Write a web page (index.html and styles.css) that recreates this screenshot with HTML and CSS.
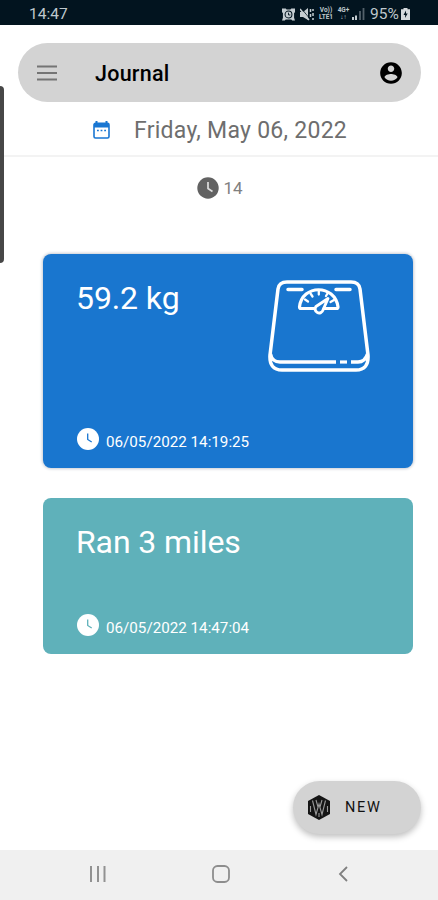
FILE: index.html
```html
<!DOCTYPE html>
<html lang="en">

<head>
    <meta charset="UTF-8">
    <meta name="viewport" content="width=device-width, initial-scale=1.0">
    <title>Journal</title>
    <link rel="stylesheet" href="styles.css">
</head>

<body>
    <div class="status-bar">
        <span class="status-time">14:47</span>
        <div class="status-icons">
            <!-- alarm -->
            <svg class="alarm" width="13" height="13" viewBox="0 0 14 13">
                <path d="M0 0h4l1 1h4l1-1h4v4l-1 1v5l1 3h-3l-1-1H4l-1 1H0l1-3V5L0 4z" fill="#c5cdd1" />
                <circle cx="7" cy="6.500" r="3.700" fill="none" stroke="#02141f" stroke-width="1.100" />
                <path d="M7 4.500V7h2" fill="none" stroke="#02141f" />
            </svg>
            <!-- muted, vibrate -->
            <svg class="mute" width="14" height="13" viewBox="0 0 14 13">
                <path d="M0 4h3l5-4v12L3 9H0z" fill="#c5cdd1" />
                <path d="M1 0l9 11" stroke="#02141f" stroke-width=".8" />
                <path d="M0 1l9 11M10.500 1v3M10.500 6v3M13 1v2M13 5v3M13 10v2" stroke="#c5cdd1" stroke-width="1.500" />
            </svg>
            <span class="net volte"><span>Vo))</span><span>LTE1</span></span>
            <span class="net data"><span>4G+</span><span>↓↑</span></span>
            <!-- signal -->
            <svg class="signal" width="13" height="12" viewBox="0 0 13 12">
                <path d="M1 9v3M4 7.500V12" stroke="#c5cdd1" stroke-width="2" />
                <path d="M8 3v9M11.500 0v12" stroke="#53616a" stroke-width="1.800" />
            </svg>
            <span class="percent">95%</span>
            <svg class="battery" width="9" height="12" viewBox="0 0 9 12">
                <path d="M2.500 0h4v1.200H9V12H0V1.200h2.500z" fill="#d5dadd" />
                <path d="M5 2.500L2.500 7h1.700L4 10l2.700-4.500H5z" fill="#02141f" />
            </svg>
        </div>
    </div>

    <div class="drawer-handle"></div>

    <header class="toolbar">
        <svg class="menu" width="20" height="16" viewBox="0 0 20 16">
            <path d="M0 1.500h20M0 8h20M0 14.500h20" stroke="#747474" stroke-width="2.200" />
        </svg>
        <h1>Journal</h1>
        <svg class="account" width="26" height="26" viewBox="0 0 24 24">
            <path d="M12 2C6.480 2 2 6.480 2 12s4.480 10 10 10 10-4.480 10-10S17.520 2 12 2zm0 3c1.660 0 3 1.340 3 3s-1.340 3-3 3-3-1.340-3-3 1.340-3 3-3zm0 14.200c-2.500 0-4.710-1.280-6-3.220.03-1.990 4-3.080 6-3.080 1.990 0 5.970 1.090 6 3.080-1.290 1.940-3.500 3.220-6 3.220z" />
        </svg>
    </header>

    <div class="date-row">
        <svg width="17" height="18" viewBox="0 0 17 18">
            <path d="M2.500 2.300h12a1.500 1.500 0 0 1 1.500 1.500v11.700a1.500 1.500 0 0 1-1.500 1.500h-12A1.500 1.500 0 0 1 1 15.500V3.800a1.500 1.500 0 0 1 1.500-1.500z" fill="#fff" stroke="#1976d2" stroke-width="1.600" />
            <path d="M1 2h15v4.500H1zM2.500 0h2v3h-2zM12.500 0h2v3h-2z" fill="#1976d2" />
            <path d="M4 9.500h1.800M7.600 9.500h1.800M11.200 9.500H13" stroke="#1976d2" stroke-width="1.600" />
        </svg>
        <span>Friday, May 06, 2022</span>
    </div>

    <div class="hour">
        <svg width="22" height="22" viewBox="0 0 22 22">
            <circle cx="11" cy="11" r="10.700" fill="#626262" />
            <path d="M11 5v6.500l4.500 3" fill="none" stroke="#ddd" stroke-width="1.700" />
        </svg>
        <span>14</span>
    </div>

    <main class="entries">
        <article class="card weight">
            <h2>59.2 kg</h2>
            <!-- bathroom scale -->
            <svg class="scale" width="102" height="93" viewBox="0 0 102 93" fill="none" stroke="#fff" stroke-width="3.500" stroke-linecap="round" stroke-linejoin="round">
                <path d="M19 2H83Q91 2 92 9L100 75Q101 90 88 90H14Q1 90 2 75L10 9Q11 2 19 2z" />
                <path d="M2.500 74Q4 82 12 82H68M83 82H90Q97 82 99.500 74" stroke-linecap="butt" />
                <path d="M72 82h7" stroke-width="3.200" stroke-linecap="butt" />
                <path d="M20 9.500H34M68 9.500H82" />
                <path d="M46 28.500H33Q31.500 28.500 31.500 27C34 4 67 4 70 27Q70 28.500 68.500 28.500H56" stroke-width="3.200" />
                <path d="M37 19.500l3 2M42.500 13.500l2 3M50.800 10.500v4M59.500 13.500l-1.500 2.500M66 20l-3.500 2" stroke-width="2.300" />
                <path d="M60 18.500L48 26.500A4 4 0 1 0 55 30z" stroke-width="2.900" />
            </svg>
            <div class="stamp">
                <svg width="22" height="22" viewBox="0 0 22 22">
                    <circle cx="11" cy="11" r="11" fill="#fff" />
                    <path d="M10.700 5.500v6l4 2.500" fill="none" stroke="#1976d2" stroke-width="1.300" />
                </svg>
                <span>06/05/2022 14:19:25</span>
            </div>
        </article>

        <article class="card run">
            <h2>Ran 3 miles</h2>
            <div class="stamp">
                <svg width="22" height="22" viewBox="0 0 22 22">
                    <circle cx="11" cy="11" r="11" fill="#fff" />
                    <path d="M10.700 5.500v6l4 2.500" fill="none" stroke="#5fb1ba" stroke-width="1.300" />
                </svg>
                <span>06/05/2022 14:47:04</span>
            </div>
        </article>
    </main>

    <div class="new-button">
        <svg width="22" height="25" viewBox="0 0 22 25">
            <path d="M11 0l11 6v13l-11 6-11-6V6z" fill="#151515" />
            <path d="M4.500 5.500l3.500 14L11 9l3 10.500 3.500-14M8 5l2 7M14 5l-2 7M2.500 11v6M19.500 11v6M11 18v4" fill="none" stroke="#999" stroke-width="1.100" />
        </svg>
        <span>NEW</span>
    </div>

    <nav class="nav-bar">
        <svg width="18" height="16" viewBox="0 0 18 16">
            <path d="M2 0v16M9 0v16M15.500 0v16" stroke="#929292" stroke-width="2" />
        </svg>
        <svg class="home" width="18" height="18" viewBox="0 0 18 18">
            <rect x="1" y="1" width="16" height="16" rx="4.500" fill="none" stroke="#8d8d8d" stroke-width="1.800" />
        </svg>
        <svg width="10" height="16" viewBox="0 0 10 16">
            <path d="M9 1L2 8l7 7" fill="none" stroke="#808080" stroke-width="1.800" />
        </svg>
    </nav>
</body>

</html>
```
FILE: styles.css
```css
* {
    box-sizing: border-box;
}

body {
    display: flex;
    flex-direction: column;
    height: 900px;
    margin: 0;
    background: #fff;
    font-family: Roboto, "Liberation Sans", sans-serif;
    overflow: hidden;
}

svg {
    display: block;
    flex: none;
}

h1,
h2 {
    margin: 0;
}

/* system status bar */
.status-bar {
    display: flex;
    align-items: center;
    justify-content: space-between;
    height: 25px;
    padding: 3px 28px 0 29px;
    background: #02141f;
    color: #bfc8cd;
}

.status-time {
    font-size: 15.5px;
    font-weight: 400;
}

.status-icons {
    display: flex;
    align-items: center;
}

.mute {
    margin-left: 5px;
}

.net {
    display: flex;
    flex-direction: column;
    font-size: 6.5px;
    font-weight: 700;
    line-height: 7px;
    text-align: center;
    white-space: nowrap;
}

.volte {
    width: 16px;
    margin-left: 4px;
}

.data {
    width: 13px;
    margin-left: 3px;
}

.signal {
    margin-left: 2px;
}

.percent {
    width: 31px;
    margin-left: 5px;
    font-size: 15.5px;
}

/* edge handle lies over the page */
.drawer-handle {
    position: absolute;
    top: 86px;
    left: 0;
    width: 4px;
    height: 177px;
    border-radius: 0 4px 4px 0;
    background: #474747;
}

.toolbar {
    display: flex;
    align-items: center;
    height: 59px;
    margin: 18px 17px 0 18px;
    padding: 0 17px 0 19px;
    border-radius: 30px;
    background: #d3d3d3;
}

.toolbar h1 {
    margin-left: 38px;
    padding-top: 2px;
    font-size: 21.5px;
    font-weight: 500;
    line-height: 26px;
    letter-spacing: .25px;
}

.account {
    margin-left: auto;
}

.date-row {
    display: flex;
    align-items: center;
    height: 55px;
    padding: 0 0 0 93px;
    border-bottom: 2px solid #f3f3f3;
    color: #6e6e6e;
    font-size: 23px;
    letter-spacing: .26px;
}

.date-row span {
    margin: 3px 0 0 24px;
    white-space: nowrap;
}

.date-row svg {
    margin-top: 2px;
}

.hour {
    display: flex;
    align-items: center;
    justify-content: center;
    gap: 4px;
    height: 62px;
    padding-left: 2px;
    color: #808080;
    font-size: 17px;
}

.entries {
    display: flex;
    flex-direction: column;
    gap: 30px;
    padding: 35px 25px 0 43px;
}

.card {
    display: grid;
    grid-template-columns: 1fr auto;
    grid-template-rows: 1fr auto;
    padding: 24px 43px 17px 33px;
    border-radius: 8px;
    color: #fff;
}

.card h2 {
    font-size: 32px;
    font-weight: 400;
    line-height: 40px;
    letter-spacing: -.1px;
}

.scale {
    margin-top: 2px;
}

.weight {
    height: 214px;
    background: #1976cf;
    box-shadow: 0 0 3px 1px #c9cdd4;
}

.run {
    height: 156px;
    background: #5fb1ba;
}

.stamp {
    display: flex;
    align-items: center;
    gap: 7px;
    grid-row: 2;
    padding-left: 1px;
    font-size: 15.2px;
}

.stamp span {
    padding-top: 7px;
    line-height: 18px;
}

.new-button {
    display: flex;
    align-items: center;
    gap: 15px;
    width: 128px;
    height: 53px;
    margin: auto 17px 16px auto;
    padding-left: 15px;
    border-radius: 27px;
    background: #d3d3d3;
    box-shadow: 0 3px 6px rgba(0, 0, 0, .25);
    color: #111;
    font-size: 14.5px;
    font-weight: 400;
    letter-spacing: 1.7px;
}

.nav-bar {
    display: flex;
    align-items: center;
    justify-content: space-between;
    height: 50px;
    padding: 0 90px 2px 89px;
    background: #f0f0f0;
}

.home {
    margin-right: 4px;
}
```
